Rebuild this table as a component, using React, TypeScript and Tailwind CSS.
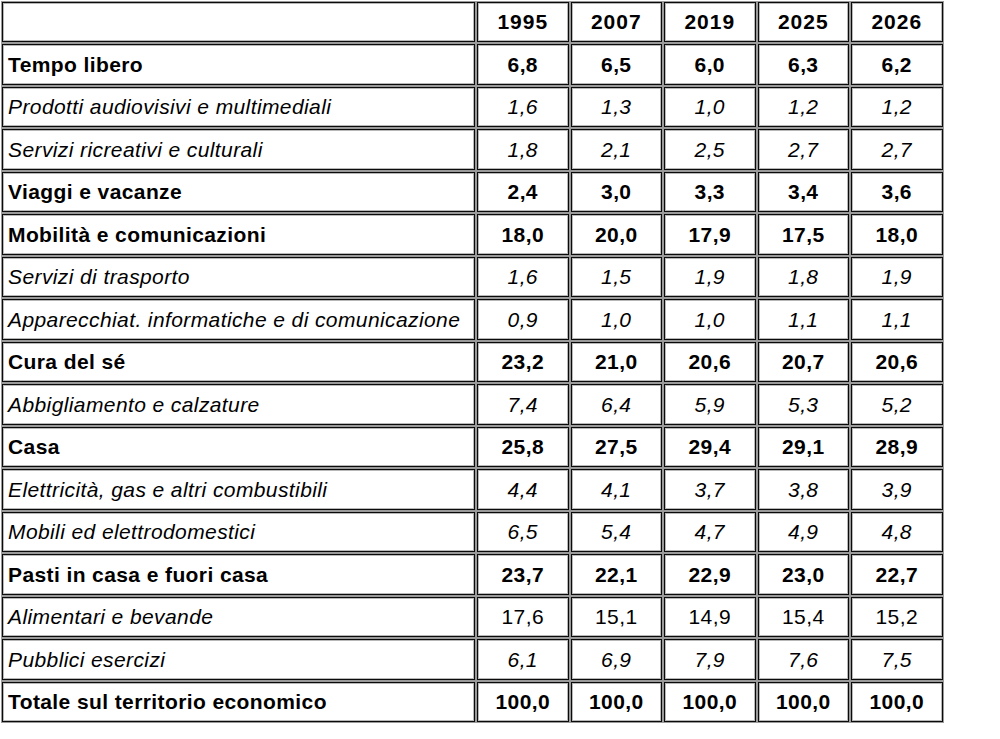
import React from 'react'

type Row = {
  label: string
  kind: 'bold' | 'italic'
  values: string[]
  uprightValues?: boolean
}

const years = ['1995', '2007', '2019', '2025', '2026']

const rows: Row[] = [
  { label: 'Tempo libero', kind: 'bold', values: ['6,8', '6,5', '6,0', '6,3', '6,2'] },
  { label: 'Prodotti audiovisivi e multimediali', kind: 'italic', values: ['1,6', '1,3', '1,0', '1,2', '1,2'] },
  { label: 'Servizi ricreativi e culturali', kind: 'italic', values: ['1,8', '2,1', '2,5', '2,7', '2,7'] },
  { label: 'Viaggi e vacanze', kind: 'bold', values: ['2,4', '3,0', '3,3', '3,4', '3,6'] },
  { label: 'Mobilità e comunicazioni', kind: 'bold', values: ['18,0', '20,0', '17,9', '17,5', '18,0'] },
  { label: 'Servizi di trasporto', kind: 'italic', values: ['1,6', '1,5', '1,9', '1,8', '1,9'] },
  { label: 'Apparecchiat. informatiche e di comunicazione', kind: 'italic', values: ['0,9', '1,0', '1,0', '1,1', '1,1'] },
  { label: 'Cura del sé', kind: 'bold', values: ['23,2', '21,0', '20,6', '20,7', '20,6'] },
  { label: 'Abbigliamento e calzature', kind: 'italic', values: ['7,4', '6,4', '5,9', '5,3', '5,2'] },
  { label: 'Casa', kind: 'bold', values: ['25,8', '27,5', '29,4', '29,1', '28,9'] },
  { label: 'Elettricità, gas e altri combustibili', kind: 'italic', values: ['4,4', '4,1', '3,7', '3,8', '3,9'] },
  { label: 'Mobili ed elettrodomestici', kind: 'italic', values: ['6,5', '5,4', '4,7', '4,9', '4,8'] },
  { label: 'Pasti in casa e fuori casa', kind: 'bold', values: ['23,7', '22,1', '22,9', '23,0', '22,7'] },
  { label: 'Alimentari e bevande', kind: 'italic', values: ['17,6', '15,1', '14,9', '15,4', '15,2'], uprightValues: true },
  { label: 'Pubblici esercizi', kind: 'italic', values: ['6,1', '6,9', '7,9', '7,6', '7,5'] },
  { label: 'Totale sul territorio economico', kind: 'bold', values: ['100,0', '100,0', '100,0', '100,0', '100,0'] },
]

// cell frame: thin dark line with a grey halo, like the old border="1" tables
const cell =
  'h-[40.5px] border border-[#0a0a0a] p-0 shadow-[0_0_0_1px_#9a9a9a,inset_0_0_0_1px_#b8b8b8] align-middle'

export default function App() {
  return (
    <div className="bg-white w-[1000px] h-[739px] overflow-hidden text-black font-['Liberation_Sans',Arial,sans-serif] text-[21px] leading-none tracking-[0.4px]">
      <table className="border-separate border-spacing-[2px] -mt-[0.5px]">
        <thead>
          <tr>
            <th className={`${cell} w-[473px]`}></th>
            {years.map((y) => (
              <th key={y} className={`${cell} w-[91.5px] text-center font-bold tracking-[1px]`}>
                {y}
              </th>
            ))}
          </tr>
        </thead>
        <tbody>
          {rows.map((r) => {
            const labelStyle = r.kind === 'bold' ? 'font-bold' : 'italic'
            const valueStyle =
              r.kind === 'bold' ? 'font-bold' : r.uprightValues ? 'font-normal' : 'italic'
            return (
              <tr key={r.label}>
                <td className={`${cell} pl-[5px] text-left whitespace-nowrap ${labelStyle}`}>{r.label}</td>
                {r.values.map((v, i) => (
                  <td key={i} className={`${cell} text-center ${valueStyle}`}>
                    {v}
                  </td>
                ))}
              </tr>
            )
          })}
        </tbody>
      </table>
    </div>
  )
}
